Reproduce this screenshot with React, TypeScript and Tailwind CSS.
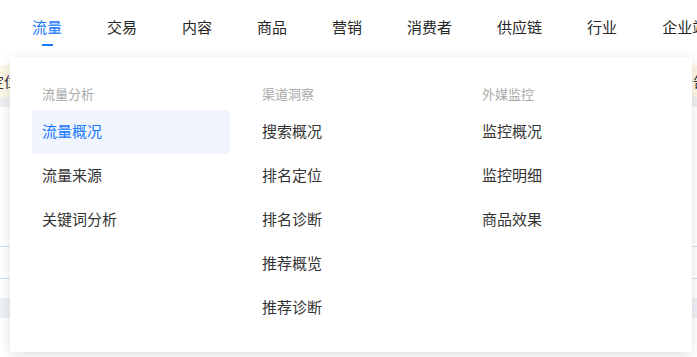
const NAV = ["流量", "交易", "内容", "商品", "营销", "消费者", "供应链", "行业", "企业站"];

const COLUMNS = [
  { title: "流量分析", items: ["流量概况", "流量来源", "关键词分析"] },
  { title: "渠道洞察", items: ["搜索概况", "排名定位", "排名诊断", "推荐概览", "推荐诊断"] },
  { title: "外媒监控", items: ["监控概况", "监控明细", "商品效果"] },
];

export default function App() {
  return (
    <div
      className="relative w-[697px] h-[357px] overflow-hidden bg-white"
      style={{ fontFamily: '"Noto Sans CJK SC", "Noto Sans", sans-serif' }}
    >
      {/* top nav */}
      <nav className="h-[57px] flex items-start pt-[16px] pl-[32px] gap-[45px] whitespace-nowrap">
        {NAV.map((n, i) => (
          <div key={n} className="relative flex flex-col items-center">
            <span
              className={
                "text-[15px] leading-[22px] " +
                (i === 0 ? "text-[#1677ff]" : "text-[#262626]")
              }
            >
              {n}
            </span>
            {i === 0 && <span className="mt-[6px] w-[11px] h-[2px] bg-[#1677ff]" />}
          </div>
        ))}
      </nav>

      {/* page underneath */}
      <div className="mt-[8px]">
        <div className="h-[32px] bg-[#fcf7e6] flex items-center justify-between text-[14px] text-[#333] whitespace-nowrap">
          <span className="-ml-[10px]">定位</span>
          <span className="mr-[-10px]">公告</span>
        </div>
        <div className="h-[10px] bg-[#eef0f3]" />
        <div className="h-[139px]" />
        <div className="h-px bg-[#cfe0fb]" />
        <div className="h-[31px]" />
        <div className="h-px bg-[#cfe0fb]" />
        <div className="h-[19px]" />
        <div className="h-[20px] bg-[#eef1f5]" />
      </div>

      {/* dropdown */}
      <div className="absolute left-[10px] top-[57px] w-[682px] h-[295px] bg-white shadow-[0_3px_12px_rgba(0,0,0,0.12)] pt-[27px] px-[22px]">
        <div className="grid grid-cols-[198px_198px_198px] gap-x-[22px]">
          {COLUMNS.map((c, ci) => (
            <div key={c.title} className="flex flex-col">
              <div className="px-[10px] text-[13px] leading-[20px] text-[#a8a8a8] mb-[6px]">
                {c.title}
              </div>
              {c.items.map((it, ii) => {
                const active = ci === 0 && ii === 0;
                return (
                  <div
                    key={it}
                    className={
                      "h-[44px] flex items-center px-[10px] pb-[2px] rounded-[4px] text-[15px] " +
                      (active ? "bg-[#f1f5ff] text-[#1677ff]" : "text-[#333]")
                    }
                  >
                    {it}
                  </div>
                );
              })}
            </div>
          ))}
        </div>
      </div>
    </div>
  );
}
